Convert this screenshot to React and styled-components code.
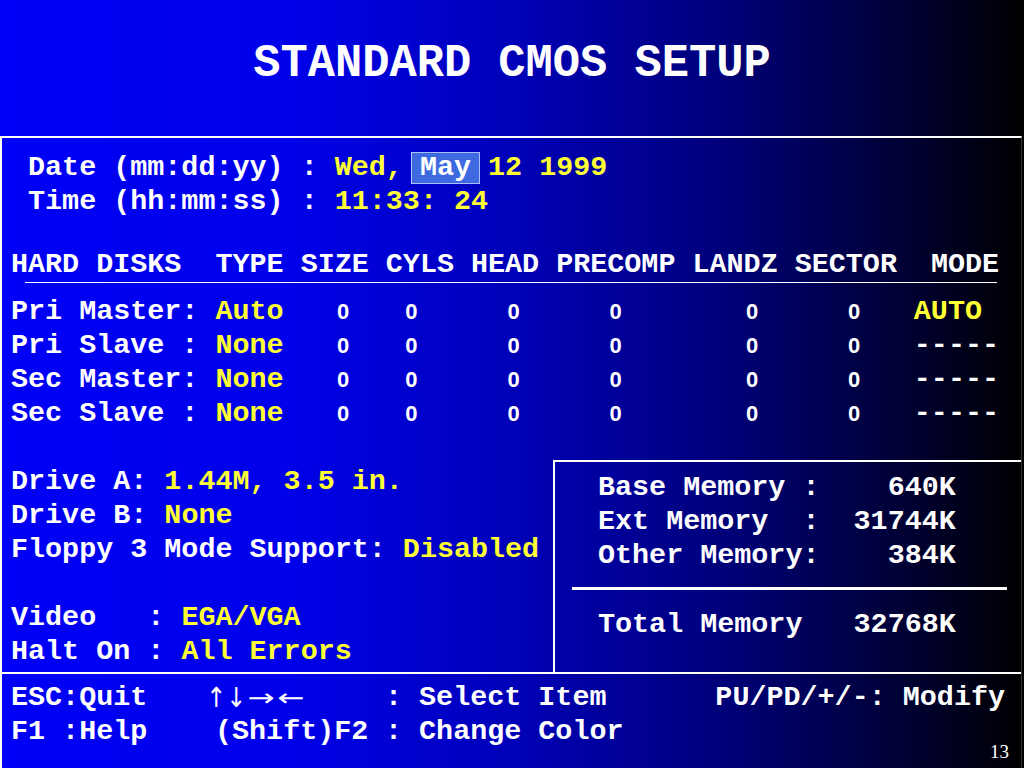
import React from 'react';
import styled, { createGlobalStyle } from 'styled-components';

const Global = createGlobalStyle`
  html, body { margin: 0; padding: 0; }
  body { width: 1024px; height: 768px; overflow: hidden; background: #000; }
`;

const Screen = styled.div`
  width: 1024px;
  height: 768px;
  display: flex;
  flex-direction: column;
  background: linear-gradient(
    to right,
    #0000f6 0%,
    #0000ea 28%,
    #0000b8 50%,
    #00007c 70%,
    #000035 88%,
    #000000 100%
  );
  font-family: "Liberation Mono", "Courier New", monospace;
  font-weight: 700;
  color: #fff;
`;

const TitleBar = styled.header`
  height: 136px;
  box-sizing: border-box;
  padding-bottom: 8px;
  display: flex;
  align-items: center;
  justify-content: center;
  font-size: 45.4px;
  white-space: pre;
`;

const Panel = styled.main`
  flex: 1;
  width: 1022px;
  box-sizing: border-box;
  border-top: 2px solid #fff;
  border-left: 2px solid #fff;
  border-right: 1px solid rgba(255, 255, 255, 0.2);
  display: flex;
  flex-direction: column;
  font-size: 28.4px;
`;

const Section = styled.section`
  padding: ${(p) => p.$pad || '0 0 0 9px'};
`;

const Line = styled.div`
  height: 34px;
  line-height: 36px;
  white-space: pre;
`;

const Val = styled.span`
  color: #ffff33;
`;

const Selected = styled.span`
  display: inline-block;
  line-height: 30px;
  padding: 0 8px;
  margin: 0 -8px;
  background: #3d6ae0;
  color: #fff;
  outline: 1px solid #a9bdff;
`;

const Header = styled(Line)`
  margin-top: 29px;
`;

const Rule = styled.div`
  height: 1px;
  background: #fff;
  margin: 1px 24px 11px 14px;
`;

const Num = styled.span`
  display: inline-block;
  width: 17px;
  text-align: center;
  font-family: "Liberation Sans", Arial, sans-serif;
  font-weight: 700;
  font-size: 22px;
`;

const Lower = styled.div`
  flex: 1;
  margin-top: 30px;
  display: flex;
`;

const DriveColumn = styled.div`
  width: 551px;
  box-sizing: border-box;
  padding: 4px 0 0 9px;
`;

const MemoryBox = styled.div`
  flex: 1;
  border-top: 2px solid #fff;
  border-left: 2px solid #fff;
  padding: 8px 0 0 43px;
`;

const MemoryRule = styled.div`
  height: 3px;
  background: #fff;
  margin: 15px 14px 17px -26px;
`;

const Footer = styled.footer`
  position: relative;
  height: 96px;
  box-sizing: border-box;
  border-top: 2px solid #fff;
  padding: 6px 16px 0 9px;
`;

const FooterLine = styled.div`
  display: grid;
  grid-template-columns: 204px 170px 1fr auto;
  height: 34px;
  line-height: 36px;
  white-space: pre;
`;

const Arrows = styled.span`
  display: flex;
  align-items: center;
  margin-left: -9px;
  font-family: "DejaVu Sans", sans-serif;
  font-weight: 400;
  font-size: 24px;
`;

const Arrow = styled.span`
  display: inline-block;
  width: ${(p) => (p.$wide ? 30 : 20)}px;
  text-align: center;
  transform: ${(p) => (p.$wide ? 'scaleX(1.35)' : 'scaleY(1.15)')};
`;

const PageNo = styled.span`
  position: absolute;
  right: 12px;
  bottom: 7px;
  font-family: "Liberation Serif", "Times New Roman", serif;
  font-weight: 400;
  font-size: 19px;
  line-height: 19px;
`;

const gaps = [3, 3, 5, 5, 7, 5];

const disks = [
  { label: 'Pri Master: ', type: 'Auto', mode: 'AUTO', yellow: true },
  { label: 'Pri Slave : ', type: 'None', mode: '-----' },
  { label: 'Sec Master: ', type: 'None', mode: '-----' },
  { label: 'Sec Slave : ', type: 'None', mode: '-----' },
];

function DiskRow({ label, type, mode, yellow }) {
  return (
    <Line>
      {label}
      <Val>{type}</Val>
      {gaps.map((g, i) => (
        <React.Fragment key={i}>
          {' '.repeat(g)}
          <Num>0</Num>
        </React.Fragment>
      ))}
      {'   '}
      {yellow ? <Val>{mode}</Val> : mode}
    </Line>
  );
}

export default function App() {
  return (
    <>
      <Global />
      <Screen>
        <TitleBar>STANDARD CMOS SETUP</TitleBar>
        <Panel>
          <Section $pad="12px 0 0 9px">
            <Line>
              {' Date (mm:dd:yy) : '}
              <Val>Wed, </Val>
              <Selected>May</Selected>
              <Val> 12 1999</Val>
            </Line>
            <Line>
              {' Time (hh:mm:ss) : '}
              <Val>11:33: 24</Val>
            </Line>
          </Section>

          <Section>
            <Header>HARD DISKS  TYPE SIZE CYLS HEAD PRECOMP LANDZ SECTOR  MODE</Header>
            <Rule />
            {disks.map((d) => (
              <DiskRow key={d.label} {...d} />
            ))}
          </Section>

          <Lower>
            <DriveColumn>
              <Line>
                {'Drive A: '}
                <Val>1.44M, 3.5 in.</Val>
              </Line>
              <Line>
                {'Drive B: '}
                <Val>None</Val>
              </Line>
              <Line>
                {'Floppy 3 Mode Support: '}
                <Val>Disabled</Val>
              </Line>
              <Line />
              <Line>
                {'Video   : '}
                <Val>EGA/VGA</Val>
              </Line>
              <Line>
                {'Halt On : '}
                <Val>All Errors</Val>
              </Line>
            </DriveColumn>
            <MemoryBox>
              <Line>{'Base Memory :    640K'}</Line>
              <Line>{'Ext Memory  :  31744K'}</Line>
              <Line>{'Other Memory:    384K'}</Line>
              <MemoryRule />
              <Line>{'Total Memory   32768K'}</Line>
            </MemoryBox>
          </Lower>

          <Footer>
            <FooterLine>
              <span>ESC:Quit</span>
              <Arrows>
                <Arrow>↑</Arrow>
                <Arrow>↓</Arrow>
                <Arrow $wide>→</Arrow>
                <Arrow $wide>←</Arrow>
              </Arrows>
              <span>: Select Item</span>
              <span>PU/PD/+/-: Modify</span>
            </FooterLine>
            <FooterLine>
              <span>F1 :Help</span>
              <span>(Shift)F2</span>
              <span>: Change Color</span>
              <span />
            </FooterLine>
            <PageNo>13</PageNo>
          </Footer>
        </Panel>
      </Screen>
    </>
  );
}
